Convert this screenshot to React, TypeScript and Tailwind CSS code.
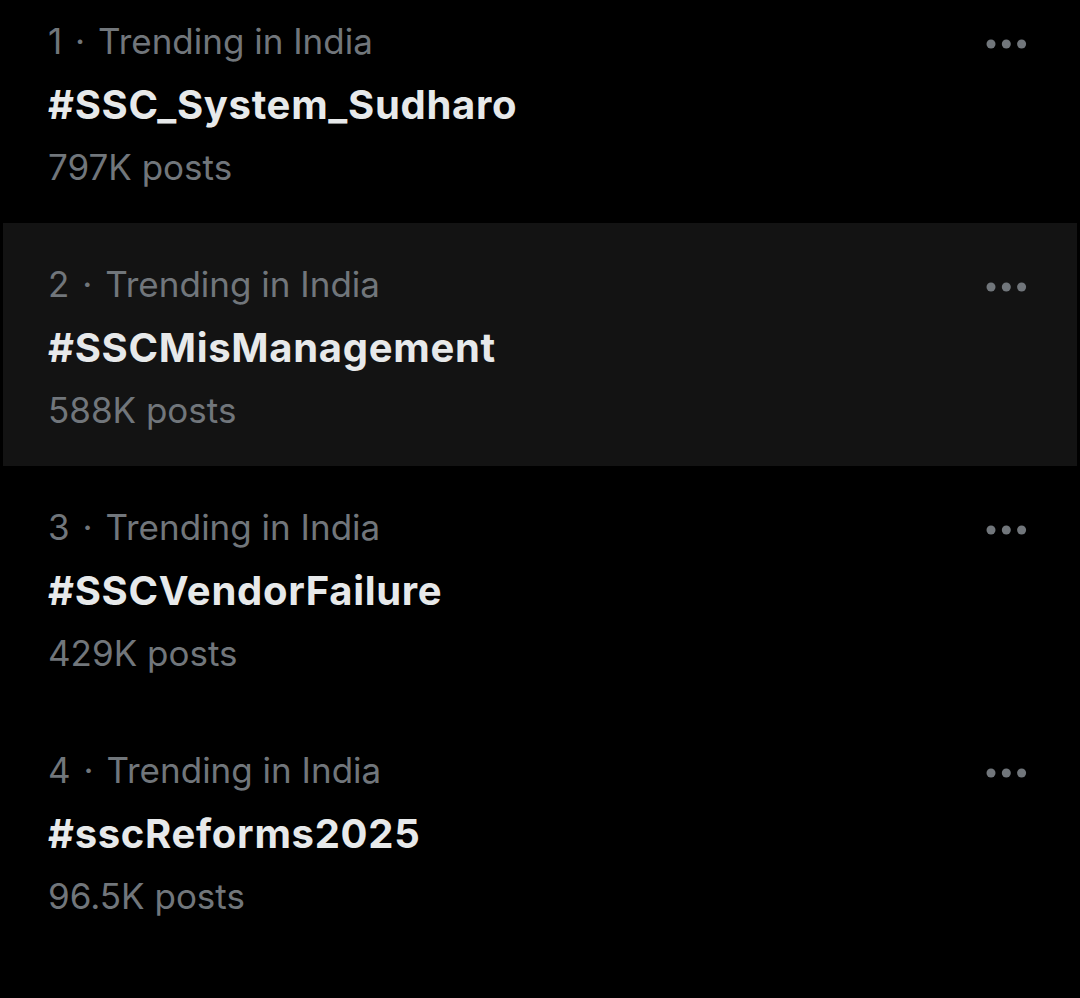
import React from 'react';

interface Trend {
    rank: number;
    region: string;
    tag: string;
    posts: string;
}

const trends: Trend[] = [
    { rank: 1, region: 'Trending in India', tag: '#SSC_System_Sudharo', posts: '797K posts' },
    { rank: 2, region: 'Trending in India', tag: '#SSCMisManagement', posts: '588K posts' },
    { rank: 3, region: 'Trending in India', tag: '#SSCVendorFailure', posts: '429K posts' },
    { rank: 4, region: 'Trending in India', tag: '#sscReforms2025', posts: '96.5K posts' },
];

const MoreDots = () => (
    <svg width="44" height="12" viewBox="0 0 44 12" className="shrink-0">
        <circle cx="7" cy="6" r="4.5" fill="#71767b" />
        <circle cx="22.3" cy="6" r="4.5" fill="#71767b" />
        <circle cx="37.6" cy="6" r="4.5" fill="#71767b" />
    </svg>
);

const TrendRow = ({ trend, active }: { trend: Trend; active?: boolean }) => (
    <div className={`h-[243px] flex items-start justify-between pl-[45px] pr-[49px] pt-[30px] ${active ? 'bg-[#131313]' : ''}`}>
        <div className="flex flex-col">
            <div className="text-[35px] leading-[63px] text-[#71767b]">
                {trend.rank}
                <span className="px-[3px]"> · </span>
                {trend.region}
            </div>
            <div className="text-[40px] leading-[63px] font-bold tracking-[0.7px] text-[#e7e9ea]">
                {trend.tag}
            </div>
            <div className="text-[35px] leading-[63px] text-[#71767b]">
                {trend.posts}
            </div>
        </div>
        <div className="mt-[28px]">
            <MoreDots />
        </div>
    </div>
);

export default function App() {
    return (
        <div className="w-[1080px] h-[998px] bg-black overflow-hidden" style={{ fontFamily: 'Inter, "Noto Sans", sans-serif' }}>
            <div className="-mt-[20px] px-[3px] flex flex-col">
                {trends.map((t, i) => (
                    <TrendRow key={t.rank} trend={t} active={i === 1} />
                ))}
            </div>
        </div>
    );
}
